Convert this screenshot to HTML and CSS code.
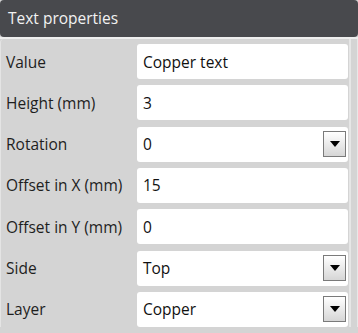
FILE: index.html
```html
<!DOCTYPE html>
<html>
<head>
<meta charset="utf-8">
<link rel="stylesheet" href="styles.css">
</head>
<body>
<div class="wrap">
  <div class="header">Text properties</div>
  <div class="body">
    <div class="panel">
      <div class="row"><div class="label">Value</div><div class="field">Copper text</div></div>
      <div class="row"><div class="label">Height (mm)</div><div class="field">3</div></div>
      <div class="row"><div class="label">Rotation</div><div class="field select"><span>0</span><span class="btn"><svg width="10" height="6" viewBox="0 0 10 6"><path d="M0 0H10L5 6Z" fill="#000"/></svg></span></div></div>
      <div class="row"><div class="label">Offset in X (mm)</div><div class="field">15</div></div>
      <div class="row"><div class="label">Offset in Y (mm)</div><div class="field">0</div></div>
      <div class="row"><div class="label">Side</div><div class="field select"><span>Top</span><span class="btn"><svg width="10" height="6" viewBox="0 0 10 6"><path d="M0 0H10L5 6Z" fill="#000"/></svg></span></div></div>
      <div class="row"><div class="label">Layer</div><div class="field select"><span>Copper</span><span class="btn"><svg width="10" height="6" viewBox="0 0 10 6"><path d="M0 0H10L5 6Z" fill="#000"/></svg></span></div></div>
    </div>
    <div class="scroll"></div>
  </div>
</div>
</body>
</html>
```
FILE: styles.css
```css
html, body { margin: 0; padding: 0; background: #d4d4d4; }
body { font-family: "Open Sans", "Noto Sans", sans-serif; width: 358px; height: 333px; overflow: hidden; }
.wrap { display: flex; flex-direction: column; }
.header {
  height: 37px;
  background: #48494d;
  color: #f2f2f2;
  font-size: 15.5px;
  line-height: 37px;
  padding-left: 8px;
  border-radius: 4px;
}
.body { display: flex; border-top: 2px solid #eeeeee; }
.panel {
  width: 349px;
  padding: 5px 0 0 0;
  display: flex;
  flex-direction: column;
  gap: 6.33px;
  border-left: 1px solid #e4e4e4;
  border-radius: 4px 0 0 0;
  box-sizing: border-box;
}
.row { display: flex; align-items: center; height: 35px; }
.label { width: 136px; padding-left: 5px; box-sizing: border-box; font-size: 15.5px; color: #1e1e1e; }
.field {
  flex: 1;
  height: 35px;
  background: #fff;
  border-radius: 3px;
  display: flex;
  align-items: center;
  justify-content: space-between;
  padding: 0 2px 0 6px;
  box-sizing: border-box;
  font-size: 15.5px;
  color: #111;
}
.btn {
  width: 21px;
  height: 24px;
  border: 1px solid #7a7a7a;
  background: linear-gradient(#ffffff, #d6d6d6);
  display: flex;
  align-items: center;
  justify-content: center;
}
.scroll {
  width: 9px;
  border-left: 2px solid #e6e6e6;
  border-right: 1px solid #e8e8e8;
  margin-left: 1px;
  box-sizing: border-box;
}
```
